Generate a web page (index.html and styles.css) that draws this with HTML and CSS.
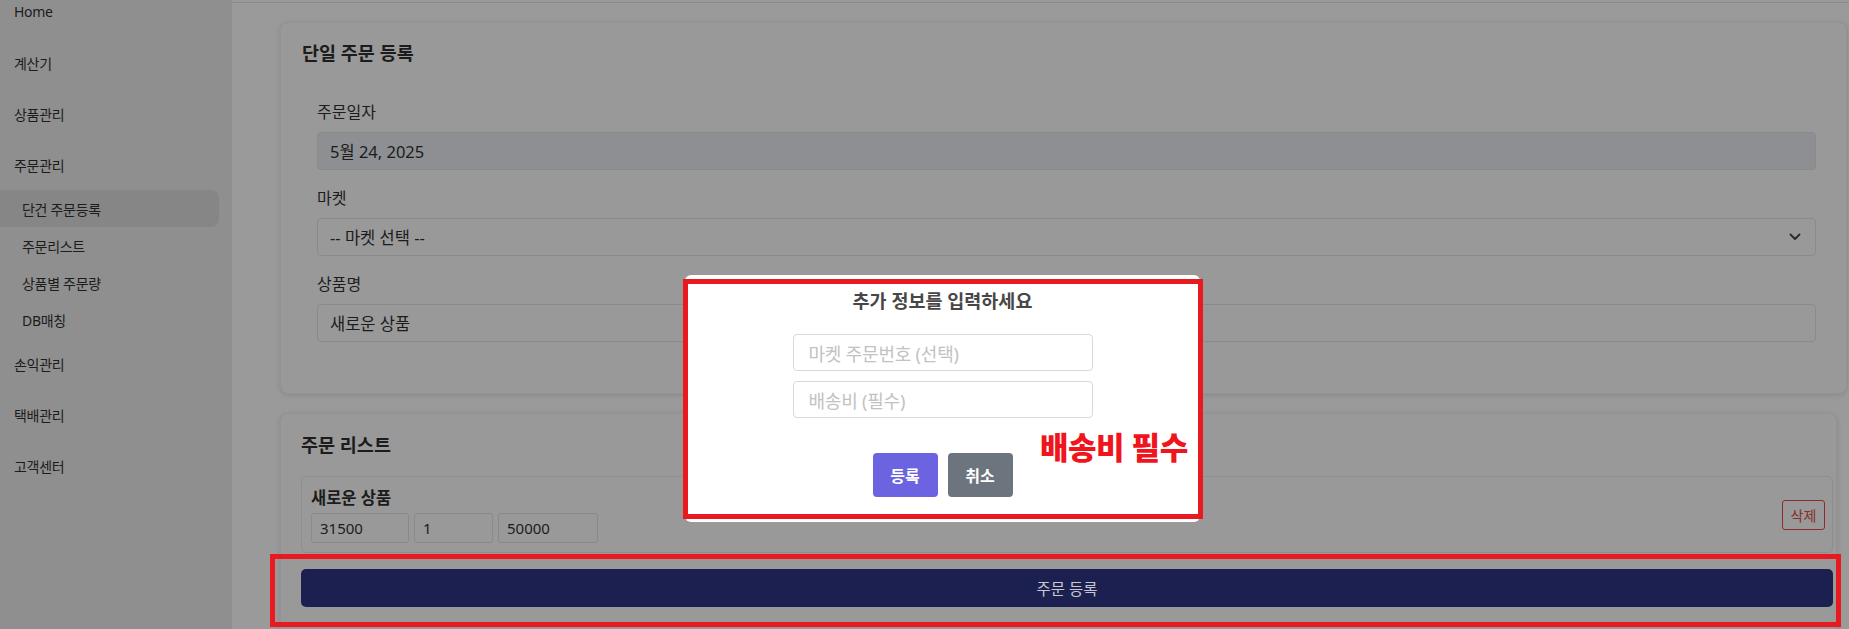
FILE: index.html
```html
<!DOCTYPE html>
<html lang="ko">
<head>
<meta charset="utf-8">
<title>단건 주문등록</title>
<link rel="stylesheet" href="styles.css">
</head>
<body>
<div class="app">
  <aside class="sidebar">
    <ul class="nav">
      <li class="nav-item">Home</li>
      <li class="nav-item">계산기</li>
      <li class="nav-item">상품관리</li>
      <li class="nav-item">주문관리</li>
      <li class="sub-item active">단건 주문등록</li>
      <li class="sub-item">주문리스트</li>
      <li class="sub-item">상품별 주문량</li>
      <li class="sub-item">DB매칭</li>
      <li class="nav-item">손익관리</li>
      <li class="nav-item">택배관리</li>
      <li class="nav-item">고객센터</li>
    </ul>
  </aside>
  <main class="main">
    <div class="topbar"></div>
    <section class="card card-form">
      <h3 class="card-title">단일 주문 등록</h3>
      <div class="form">
        <div class="group">
          <label class="label">주문일자</label>
          <div class="field field-disabled">5월 24, 2025</div>
        </div>
        <div class="group">
          <label class="label">마켓</label>
          <div class="field field-select">
            <span>-- 마켓 선택 --</span>
            <svg class="chev" width="12" height="8" viewBox="0 0 12 8"><polyline points="1.5,1.5 6,6 10.5,1.5" fill="none" stroke="#2a2a2a" stroke-width="1.8" stroke-linecap="round" stroke-linejoin="round"/></svg>
          </div>
        </div>
        <div class="group">
          <label class="label">상품명</label>
          <div class="field">새로운 상품</div>
        </div>
      </div>
    </section>
    <section class="card card-list">
      <h3 class="card-title">주문 리스트</h3>
      <div class="item">
        <div class="item-main">
          <div class="item-name">새로운 상품</div>
          <div class="item-inputs">
            <div class="mini w98">31500</div>
            <div class="mini w79">1</div>
            <div class="mini w100">50000</div>
          </div>
        </div>
        <button class="btn-del">삭제</button>
      </div>
      <button class="btn-submit">주문 등록</button>
    </section>
  </main>
</div>

<div class="modal">
  <div class="modal-title">추가 정보를 입력하세요</div>
  <div class="modal-inputs">
    <div class="m-input">마켓 주문번호 (선택)</div>
    <div class="m-input">배송비 (필수)</div>
  </div>
  <div class="modal-actions">
    <button class="btn btn-ok">등록</button>
    <button class="btn btn-cancel">취소</button>
  </div>
  <div class="note">배송비 필수</div>
</div>
<div class="mark mark-modal"></div>
<div class="mark mark-submit"></div>
</body>
</html>
```
FILE: styles.css
```css
* { box-sizing: border-box; }
html, body { margin: 0; padding: 0; }
body {
  width: 1849px;
  height: 629px;
  overflow: hidden;
  position: relative;
  font-family: "Noto Sans", "Noto Sans CJK KR", sans-serif;
  font-size: 14px;
  color: #1c1c1c;
  background: #9a9a9a;
}
.app { display: flex; height: 629px; }
.sidebar {
  width: 232px;
  flex: none;
  background: #8f8f8f;
  overflow: hidden;
}
.nav { list-style: none; margin: -14px 0 0; padding: 0; }
.nav-item {
  height: 51px;
  display: flex;
  align-items: center;
  padding-left: 14px;
  font-size: 14px;
  letter-spacing: -0.3px;
}
.sub-item {
  height: 37px;
  display: flex;
  align-items: center;
  padding-left: 22px;
  margin-right: 13px;
  font-size: 14px;
  letter-spacing: -0.3px;
  border-radius: 0 8px 8px 0;
}
.sub-item.active { background: #868686; }

.main {
  flex: 1;
  min-width: 0;
  padding: 0 2px 0 48px;
}
.topbar {
  height: 3px;
  border-bottom: 1px solid #8a8a8a;
  margin: 0 -2px 0 -48px;
}
.card {
  background: #999999;
  border: 1px solid #939393;
  border-radius: 8px;
  box-shadow: 0 1px 5px rgba(0,0,0,0.12);
}
.card-form {
  margin-top: 19px;
  padding: 17px 0 22px 21px;
  height: 372px;
}
.card-title {
  margin: 0;
  font-size: 18.5px;
  line-height: 26px;
  font-weight: 700;
}
.form { padding: 34px 30px 0 15px; }
.group { margin-bottom: 16px; }
.label {
  display: block;
  font-size: 16px;
  line-height: 24px;
  margin-bottom: 8px;
}
.field {
  height: 38px;
  border: 1px solid #8a8a8a;
  border-radius: 4px;
  padding: 0 12px;
  display: flex;
  align-items: center;
  font-size: 16.5px;
}
.field-disabled { background: #8d8f92; }
.field-select { justify-content: space-between; padding-right: 14px; }

.card-list {
  margin-top: 19px;
  margin-right: 10px;
  padding: 18px 3px 0 20px;
  height: 240px;
}
.item {
  margin-top: 18px;
  border: 1px solid #8e8e8e;
  border-radius: 5px;
  height: 77px;
  padding: 8px 7px 8px 9px;
  display: flex;
  align-items: center;
  justify-content: space-between;
}
.item-name {
  font-size: 16.5px;
  font-weight: 700;
  line-height: 24px;
  margin-bottom: 3px;
}
.item-inputs { display: flex; gap: 5px; }
.mini {
  height: 30px;
  border: 1px solid #8a8a8a;
  border-radius: 3px;
  padding: 0 8px;
  display: flex;
  align-items: center;
  font-size: 15px;
}
.w98 { width: 98px; }
.w79 { width: 79px; }
.w100 { width: 100px; }
.btn-del {
  width: 43px;
  height: 30px;
  border: 1px solid #8c2b2b;
  border-radius: 3px;
  background: transparent;
  color: #8c2b2b;
  font-family: inherit;
  font-size: 14px;
  padding: 0;
}
.btn-submit {
  display: block;
  width: 100%;
  margin-top: 16px;
  height: 38px;
  border: 0;
  border-radius: 5px;
  background: #1c2050;
  color: #c6c7cf;
  font-family: inherit;
  font-size: 15.5px;
}

.modal {
  position: absolute;
  left: 685px;
  top: 275px;
  width: 515px;
  height: 247px;
  background: #ffffff;
  border-radius: 6px;
  display: flex;
  flex-direction: column;
  align-items: center;
  padding-top: 13px;
}
.modal-title {
  font-size: 18.5px;
  line-height: 26px;
  font-weight: 700;
  color: #474747;
}
.modal-inputs {
  margin-top: 20px;
  display: flex;
  flex-direction: column;
  gap: 10px;
}
.m-input {
  width: 300px;
  height: 37px;
  border: 1px solid #d9d9d9;
  border-radius: 4px;
  padding: 0 15px;
  display: flex;
  align-items: center;
  color: #c2c2c2;
  font-size: 18px;
  letter-spacing: -0.2px;
}
.modal-actions {
  margin-top: 35px;
  display: flex;
  gap: 10px;
}
.btn {
  width: 65px;
  height: 44px;
  border: 0;
  border-radius: 4px;
  color: #ffffff;
  font-family: inherit;
  font-size: 16px;
  font-weight: 700;
  padding: 0;
}
.btn-ok { background: #6c63e0; }
.btn-cancel { background: #6c757d; }
.note {
  position: absolute;
  left: 355px;
  top: 151px;
  font-size: 31px;
  line-height: 42px;
  font-weight: 900;
  color: #f0141c;
  letter-spacing: -0.5px;
}
.mark {
  position: absolute;
  border: 5px solid #e8191f;
}
.mark-modal { left: 683px; top: 279px; width: 520px; height: 240px; }
.mark-submit { left: 270px; top: 554px; width: 1571px; height: 73px; }
```
